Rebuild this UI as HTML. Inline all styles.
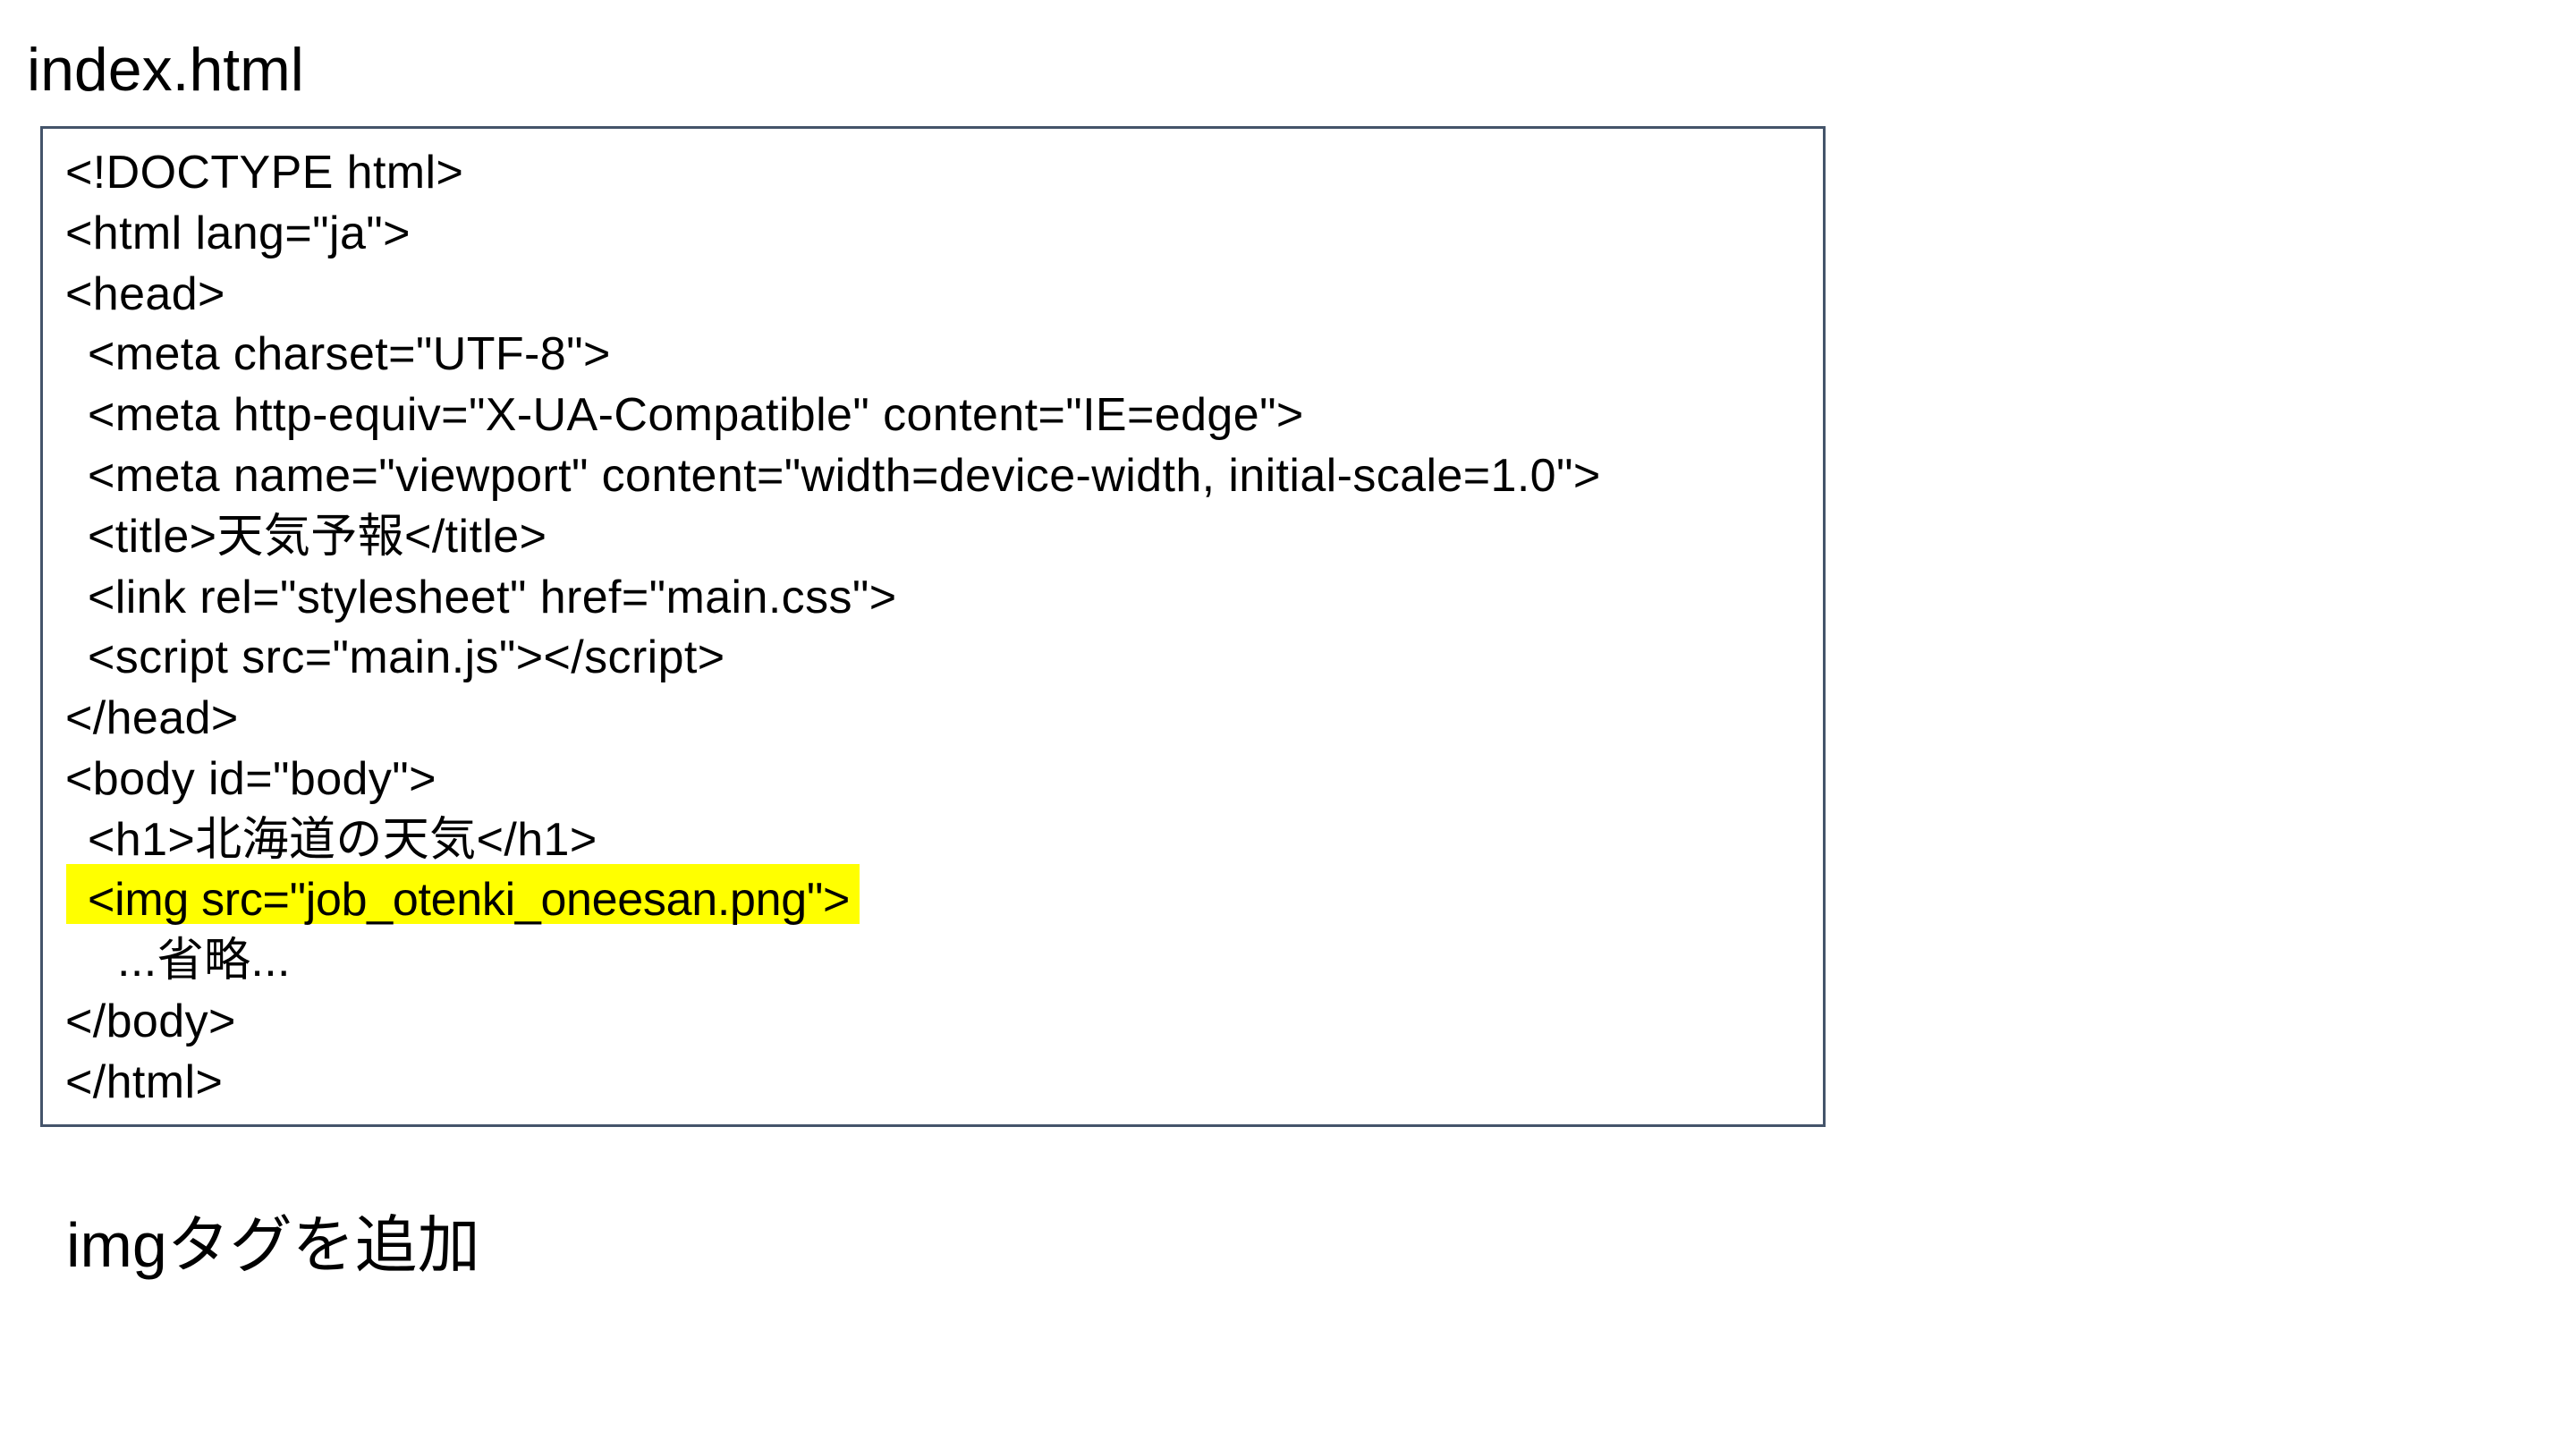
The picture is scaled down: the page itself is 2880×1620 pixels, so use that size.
<!DOCTYPE html>
<html><head><meta charset="utf-8"><style>
html,body{margin:0;padding:0;background:#fff;width:2880px;height:1620px;overflow:hidden}
body{position:relative;font-family:"Liberation Sans","Noto Sans CJK JP",sans-serif;color:#000}
.t{position:absolute;white-space:pre}
.box{position:absolute;left:45px;top:141px;width:1990px;border:3px solid #44546A;box-sizing:content-box}
.l{position:absolute;font-size:52px;line-height:68px;white-space:pre;letter-spacing:0.4px}
.hl{position:absolute;left:74px;top:966px;width:887px;height:67px;background:#ffff00}
</style></head><body>
<div class="t" style="left:30px;top:38px;font-size:68px;line-height:80px">index.html</div>
<div class="box" style="height:1113px"></div>
<div class="hl"></div>
<div class="l" style="left:73px;top:159px">&lt;!DOCTYPE html&gt;</div>
<div class="l" style="left:73px;top:227px">&lt;html lang="ja"&gt;</div>
<div class="l" style="left:73px;top:295px">&lt;head&gt;</div>
<div class="l" style="left:98px;top:362px">&lt;meta charset="UTF-8"&gt;</div>
<div class="l" style="left:98px;top:430px">&lt;meta http-equiv="X-UA-Compatible" content="IE=edge"&gt;</div>
<div class="l" style="left:98px;top:498px">&lt;meta name="viewport" content="width=device-width, initial-scale=1.0"&gt;</div>
<div class="l" style="left:98px;top:566px">&lt;title&gt;天気予報&lt;/title&gt;</div>
<div class="l" style="left:98px;top:634px">&lt;link rel="stylesheet" href="main.css"&gt;</div>
<div class="l" style="left:98px;top:701px">&lt;script src="main.js"&gt;&lt;/script&gt;</div>
<div class="l" style="left:73px;top:769px">&lt;/head&gt;</div>
<div class="l" style="left:73px;top:837px">&lt;body id="body"&gt;</div>
<div class="l" style="left:98px;top:905px">&lt;h1&gt;北海道の天気&lt;/h1&gt;</div>
<div class="l" style="left:98px;top:972px;letter-spacing:-0.3px">&lt;img src="job_otenki_oneesan.png"&gt;</div>
<div class="l" style="left:131px;top:1040px">...省略...</div>
<div class="l" style="left:73px;top:1108px">&lt;/body&gt;</div>
<div class="l" style="left:73px;top:1176px">&lt;/html&gt;</div>
<div class="t" style="left:74px;top:1352px;font-size:70px;line-height:80px">imgタグを追加</div>
</body></html>
